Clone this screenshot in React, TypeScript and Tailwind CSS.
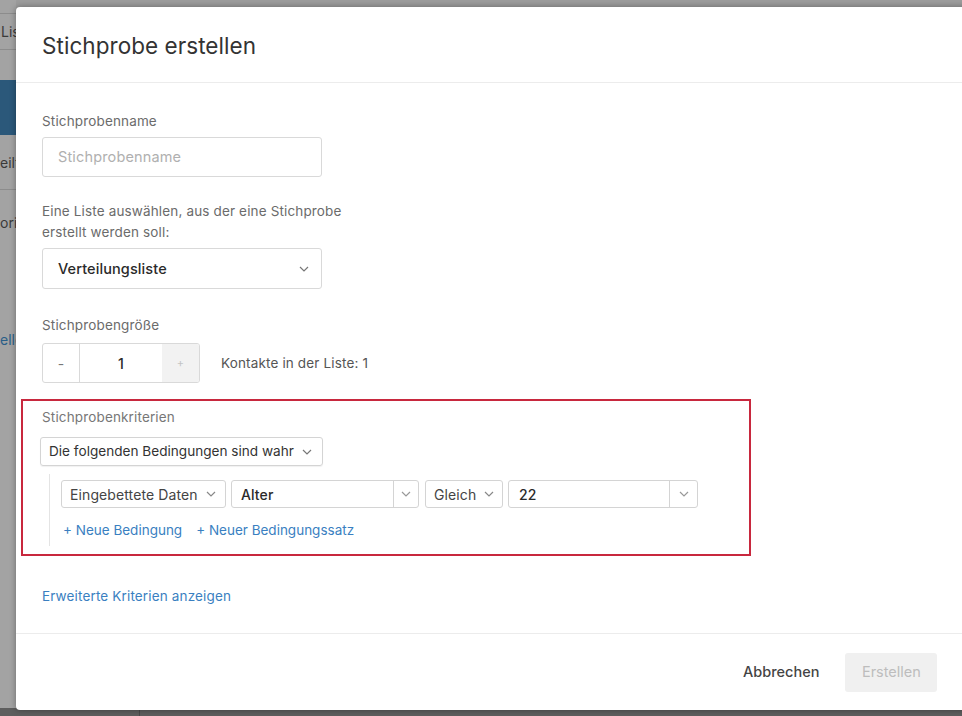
import React from 'react';

const font = { fontFamily: 'Inter, "Liberation Sans", sans-serif' };

const Chevron: React.FC<{ className?: string }> = ({ className }) => (
  <svg width="10" height="6" viewBox="0 0 10 6" className={className}>
    <path d="M1 1l4 4 4-4" fill="none" stroke="currentColor" strokeWidth="1.2" />
  </svg>
);

const App: React.FC = () => {
  return (
    <div className="relative w-[962px] h-[716px] overflow-hidden bg-[#9c9c9c]" style={font}>
      {/* Page behind the overlay */}
      <div className="w-[16px] h-full flex flex-col bg-[#a3a3a3] text-[#3a3a3a] text-[14px]">
        <div className="h-[14px] border-b border-[#8c8c8c]" />
        <div className="h-[36px] flex items-center border-b border-[#8c8c8c] pl-[1px]">Lis</div>
        <div className="h-[30px]" />
        <div className="h-[55px] bg-[#2b587a]" />
        <div className="h-[55px] flex items-center border-b border-[#8c8c8c]">eilt</div>
        <div className="h-[64px] flex items-center">ori</div>
        <div className="h-[70px]" />
        <div className="h-[30px] flex items-center text-[#2a5f88]">elle</div>
      </div>
      <div className="absolute left-0 right-0 bottom-0 h-[8px] bg-[#5e5e5e] flex">
        <div className="w-[140px] border-r border-[#4a4a4a]" />
      </div>

      {/* Modal */}
      <div className="absolute left-[16px] top-[7px] w-[960px] h-[703px] bg-white rounded-[4px] shadow-[0_0_6px_rgba(0,0,0,0.35)] flex flex-col">
        <div className="h-[76px] flex items-center px-[26px] border-b border-[#ececec]">
          <h1 className="text-[22.5px] text-[#333] tracking-[0.05px] mt-[2px]">Stichprobe erstellen</h1>
        </div>

        <div className="flex-1 flex flex-col px-[26px] pt-[30px] text-[13.5px] tracking-[0.15px]">
          <label className="text-[#6b6b6b] leading-[16px]">Stichprobenname</label>
          <div className="mt-[8px] w-[280px] h-[40px] border border-[#d9d9d9] rounded-[3px] flex items-center px-[15px] text-[14.5px] text-[#b0b0b0]">
            Stichprobenname
          </div>

          <p className="mt-[24px] w-[320px] text-[#6b6b6b] leading-[21px]">
            Eine Liste auswählen, aus der eine Stichprobe erstellt werden soll:
          </p>
          <div className="mt-[5px] w-[280px] h-[41px] border border-[#d9d9d9] rounded-[3px] flex items-center justify-between pl-[15px] pr-[12px] text-[14.5px] text-[#2a2a2a] font-medium tracking-[0.1px]">
            Verteilungsliste
            <Chevron className="text-[#777]" />
          </div>

          <label className="mt-[28px] text-[#6b6b6b] leading-[16px]">Stichprobengröße</label>
          <div className="mt-[10px] flex items-center">
            <div className="flex h-[40px] border border-[#d9d9d9] rounded-[3px] overflow-hidden">
              <div className="w-[37px] flex items-center justify-center text-[#777] text-[14px] border-r border-[#d9d9d9]">-</div>
              <div className="w-[82px] flex items-center justify-center text-[#2a2a2a] text-[14px] font-medium">1</div>
              <div className="w-[37px] flex items-center justify-center text-[#c4c4c4] text-[11px] bg-[#f2f2f2]">+</div>
            </div>
            <span className="ml-[21px] text-[#555]">Kontakte in der Liste: 1</span>
          </div>

          {/* Criteria */}
          <div className="mt-[16px] -ml-[21px] w-[730px] h-[157px] border-2 border-[#c8283e] pl-[19px] pt-[8px]">
            <div className="text-[#777] leading-[16px]">Stichprobenkriterien</div>
            <div className="mt-[12px] -ml-[2px] w-[283px] h-[29px] border border-[#d4d4d4] rounded-[3px] shadow-[0_1px_1px_rgba(0,0,0,0.06)] flex items-center justify-between pl-[8px] pr-[10px] text-[13.6px] tracking-[0px] text-[#333] whitespace-nowrap">
              Die folgenden Bedingungen sind wahr
              <Chevron className="text-[#777]" />
            </div>
            <div className="mt-[8px] ml-[7px] border-l border-[#e4e4e4] h-[72px] pl-[11px] pt-[6px]">
              <div className="flex items-center gap-[5px] h-[28px] text-[14px] tracking-[0.1px] whitespace-nowrap">
                <div className="w-[165px] h-full border border-[#d4d4d4] rounded-[3px] flex items-center justify-between pl-[8px] pr-[9px] text-[#444]">
                  Eingebettete Daten
                  <Chevron className="text-[#888]" />
                </div>
                <div className="w-[188px] h-full border border-[#d4d4d4] rounded-[3px] flex">
                  <div className="flex-1 flex items-center pl-[9px] text-[#2a2a2a] font-medium">Alter</div>
                  <div className="w-[25px] border-l border-[#d4d4d4] flex items-center justify-center">
                    <Chevron className="text-[#999]" />
                  </div>
                </div>
                <div className="ml-[1px] w-[78px] h-full border border-[#d4d4d4] rounded-[3px] flex items-center justify-between pl-[8px] pr-[8px] text-[#444]">
                  Gleich
                  <Chevron className="text-[#888]" />
                </div>
                <div className="w-[190px] h-full border border-[#d4d4d4] rounded-[3px] flex">
                  <div className="flex-1 flex items-center pl-[10px] text-[#2a2a2a] font-medium">22</div>
                  <div className="w-[28px] border-l border-[#d4d4d4] flex items-center justify-center">
                    <Chevron className="text-[#999]" />
                  </div>
                </div>
              </div>
              <div className="mt-[12px] flex gap-[14px] text-[#3a7fc1] tracking-[0px] pl-[2px]">
                <span>+ Neue Bedingung</span>
                <span>+ Neuer Bedingungssatz</span>
              </div>
            </div>
          </div>

          <div className="mt-[30px] text-[#3a7fc1]">Erweiterte Kriterien anzeigen</div>
        </div>

        <div className="h-[77px] border-t border-[#ececec] flex items-center pl-[727px] gap-[26px]">
          <span className="text-[14.5px] text-[#444] font-medium">Abbrechen</span>
          <div className="w-[92px] h-[39px] bg-[#f0f0f0] rounded-[3px] flex items-center justify-center text-[14.5px] text-[#bdbdbd]">
            Erstellen
          </div>
        </div>
      </div>
    </div>
  );
};

export default App;
